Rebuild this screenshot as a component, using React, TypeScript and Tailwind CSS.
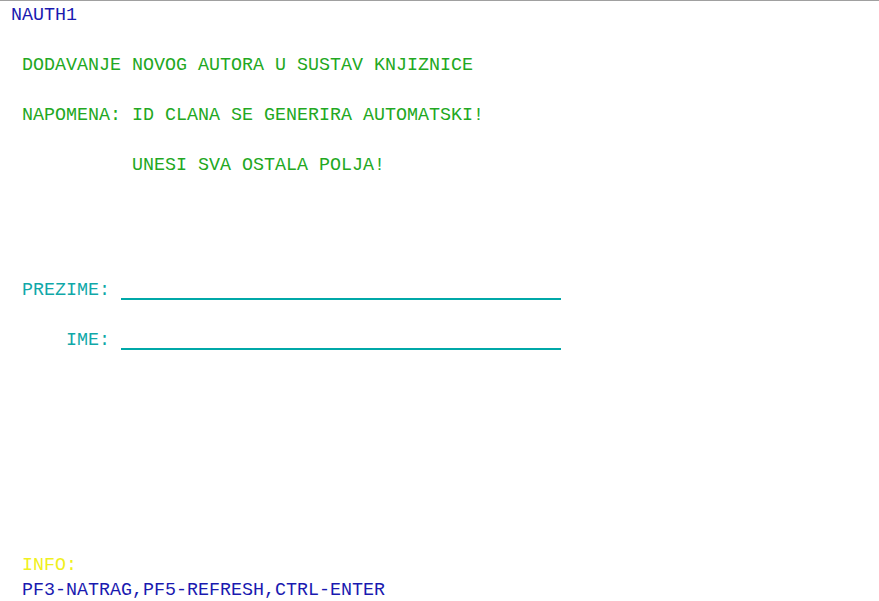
const rows: { text: string; color: string }[][] = [
  [{ text: " NAUTH1", color: "text-[#1a1ab0]" }],
  [],
  [{ text: "  DODAVANJE NOVOG AUTORA U SUSTAV KNJIZNICE", color: "text-[#22a822]" }],
  [],
  [{ text: "  NAPOMENA: ID CLANA SE GENERIRA AUTOMATSKI!", color: "text-[#22a822]" }],
  [],
  [{ text: "            UNESI SVA OSTALA POLJA!", color: "text-[#22a822]" }],
];

const Field = () => (
  <span className="inline-block h-[22px] w-[440px] border-b-2 border-[#00a8a8] align-top" />
);

const App = () => {
  return (
    <div className="h-[601px] w-[879px] overflow-hidden border-t border-[#a0a0a0] bg-white pt-[2px] font-['Liberation_Mono',monospace] text-[18.333px] leading-[25px]">
      {rows.map((row, i) => (
        <div key={i} className="h-[25px] whitespace-pre">
          {row.map((part, j) => (
            <span key={j} className={part.color}>
              {part.text}
            </span>
          ))}
        </div>
      ))}
      <div className="h-[100px]" />
      <div className="flex h-[25px] whitespace-pre">
        <span className="text-[#10a8a8]">{"  PREZIME: "}</span>
        <Field />
      </div>
      <div className="h-[25px]" />
      <div className="flex h-[25px] whitespace-pre">
        <span className="text-[#10a8a8]">{"      IME: "}</span>
        <Field />
      </div>
      <div className="h-[200px]" />
      <div className="h-[25px] whitespace-pre text-[#f0f020]">{"  INFO:"}</div>
      <div className="h-[25px] whitespace-pre text-[#1a1ab0]">
        {"  PF3-NATRAG,PF5-REFRESH,CTRL-ENTER"}
      </div>
    </div>
  );
};

export default App;
